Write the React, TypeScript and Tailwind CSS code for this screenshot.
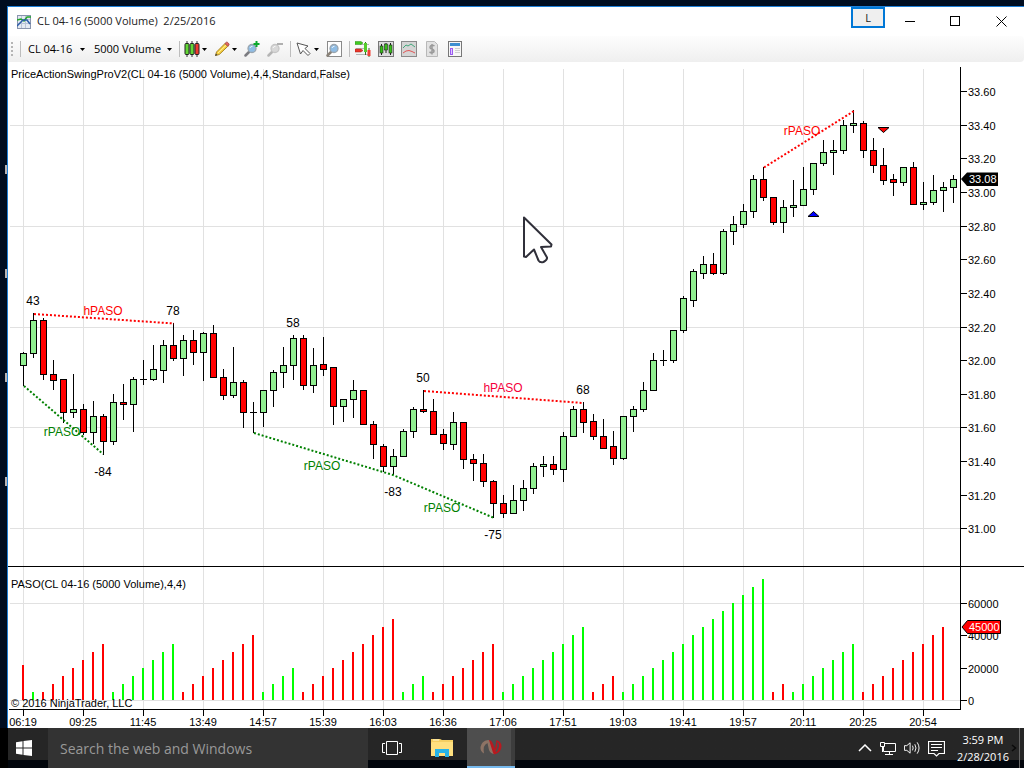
import React from "react";

type Tone = "g" | "r";
type Candle = [high: number, top: number, bottom: number, low: number, tone: Tone];

const FIRST_X = 23;
const STEP = 10;

const candles: Candle[] = [
  [352, 353, 365, 385, "g"], [313, 320, 353, 357, "g"], [318, 320, 374, 379, "r"], [360, 374, 380, 389, "r"],
  [379, 379, 412, 422, "r"], [374, 409, 412, 417, "g"], [404, 409, 432, 434, "r"], [401, 416, 432, 443, "g"],
  [414, 416, 441, 454, "r"], [394, 402, 441, 444, "g"], [384, 402, 404, 419, "r"], [377, 379, 404, 431, "g"],
  [360, 379, 379, 384, "g"], [345, 369, 379, 380, "g"], [340, 345, 370, 382, "g"], [323, 345, 358, 360, "r"],
  [335, 340, 358, 375, "g"], [330, 340, 352, 364, "r"], [332, 333, 352, 380, "g"], [325, 333, 377, 377, "r"],
  [369, 377, 395, 399, "r"], [347, 382, 395, 397, "g"], [380, 382, 412, 427, "r"], [402, 412, 412, 432, "r"],
  [390, 390, 412, 426, "g"], [370, 372, 390, 406, "g"], [347, 365, 372, 387, "g"], [335, 338, 365, 379, "g"],
  [335, 338, 385, 389, "r"], [348, 365, 385, 392, "g"], [337, 364, 369, 375, "r"], [367, 367, 406, 424, "r"],
  [399, 399, 406, 421, "g"], [380, 390, 399, 417, "g"], [390, 390, 424, 424, "r"], [421, 424, 444, 458, "r"],
  [444, 446, 466, 471, "r"], [449, 456, 466, 474, "g"], [429, 431, 456, 456, "g"], [407, 409, 431, 437, "g"],
  [390, 409, 411, 412, "r"], [399, 411, 434, 434, "r"], [429, 434, 443, 449, "r"], [412, 422, 444, 449, "g"],
  [422, 422, 459, 468, "r"], [454, 459, 463, 480, "r"], [454, 463, 481, 486, "r"], [480, 481, 503, 517, "r"],
  [495, 503, 513, 517, "r"], [485, 500, 513, 513, "g"], [480, 488, 500, 510, "g"], [463, 466, 488, 493, "g"],
  [456, 464, 466, 476, "g"], [456, 464, 469, 474, "r"], [432, 436, 469, 481, "g"], [406, 409, 436, 436, "g"],
  [402, 409, 422, 432, "r"], [414, 421, 436, 439, "r"], [419, 436, 448, 448, "r"], [431, 446, 458, 464, "r"],
  [416, 416, 458, 459, "g"], [406, 409, 416, 431, "g"], [382, 390, 409, 411, "g"], [353, 360, 390, 390, "g"],
  [350, 360, 360, 365, "g"], [330, 330, 360, 362, "g"], [296, 298, 330, 332, "g"], [269, 271, 300, 306, "g"],
  [256, 264, 273, 278, "g"], [253, 264, 273, 274, "r"], [229, 231, 273, 274, "g"], [216, 224, 231, 244, "g"],
  [204, 211, 224, 227, "g"], [175, 179, 211, 217, "g"], [167, 179, 197, 200, "r"], [197, 197, 222, 224, "r"],
  [200, 207, 222, 232, "g"], [180, 205, 207, 216, "g"], [167, 189, 205, 205, "g"], [163, 163, 189, 194, "g"],
  [140, 152, 163, 165, "g"], [140, 150, 152, 174, "g"], [120, 125, 150, 153, "g"], [110, 123, 125, 132, "g"],
  [121, 123, 150, 157, "r"], [138, 150, 165, 172, "r"], [148, 165, 180, 184, "r"], [174, 179, 182, 195, "r"],
  [167, 167, 182, 185, "g"], [162, 167, 204, 204, "r"], [182, 202, 204, 209, "g"], [175, 190, 202, 204, "g"],
  [182, 187, 190, 211, "g"], [175, 179, 187, 202, "g"],
];

const runs: [count: number, tone: Tone][] = [
  [1, "g"], [7, "r"], [7, "g"], [8, "r"], [4, "g"], [10, "r"], [3, "g"], [7, "r"],
  [9, "g"], [3, "r"], [15, "g"], [2, "r"], [7, "g"], [9, "r"],
];

const barTops = [692, 684, 676, 668, 660, 652, 644, 635, 627, 619, 611, 603, 595, 587, 579];

const bars: { top: number; tone: Tone }[] = [{ top: 665, tone: "r" }];
runs.forEach(([count, tone]) => {
  for (let n = 0; n < count; n++) bars.push({ top: barTops[n], tone });
});

const times = [
  "06:19", "09:25", "11:45", "13:49", "14:57", "15:39", "16:03", "16:36",
  "17:06", "17:51", "19:03", "19:41", "19:57", "20:11", "20:25", "20:54",
];

const prices: [string, number][] = [
  ["33.60", 91], ["33.40", 125], ["33.20", 158], ["33.00", 192], ["32.80", 226], ["32.60", 259], ["32.40", 293],
  ["32.20", 327], ["32.00", 360], ["31.80", 394], ["31.60", 427], ["31.40", 461], ["31.20", 495], ["31.00", 528],
];

const volumes: [string, number][] = [["60000", 603], ["40000", 635], ["20000", 668], ["0", 700]];

const trends: { points: string; color: string }[] = [
  { points: "34,314 174,323.5", color: "#ff0000" },
  { points: "24,386 103,454", color: "#008000" },
  { points: "254,433 393,475 493,517.5", color: "#008000" },
  { points: "424,391 583,403", color: "#ff0000" },
  { points: "764,167.5 854,111", color: "#ff0000" },
];

const notes: { x: number; y: number; text: string; color: string }[] = [
  { x: 33, y: 305, text: "43", color: "#000" },
  { x: 173, y: 315, text: "78", color: "#000" },
  { x: 293, y: 327, text: "58", color: "#000" },
  { x: 423, y: 382, text: "50", color: "#000" },
  { x: 583, y: 394, text: "68", color: "#000" },
  { x: 103, y: 476, text: "-84", color: "#000" },
  { x: 393, y: 496, text: "-83", color: "#000" },
  { x: 493, y: 539, text: "-75", color: "#000" },
  { x: 103, y: 315, text: "hPASO", color: "#ff0000" },
  { x: 503, y: 392, text: "hPASO", color: "#f5003c" },
  { x: 802, y: 135, text: "rPASO", color: "#ff0000" },
  { x: 62, y: 436, text: "rPASO", color: "#008000" },
  { x: 322, y: 470, text: "rPASO", color: "#008000" },
  { x: 442, y: 512, text: "rPASO", color: "#008000" },
];

const chartFont = "block w-full font-['Liberation_Sans',Arial,sans-serif]";

function GridColumns({ from, to }: { from: number; to: number }) {
  return (
    <g stroke="#e1e1e1" shapeRendering="crispEdges">
      {times.map((t, i) => (
        <line key={t} x1={FIRST_X + i * 60 + 0.5} x2={FIRST_X + i * 60 + 0.5} y1={from} y2={to} />
      ))}
    </g>
  );
}

function PricePanel() {
  return (
    <svg className={chartFont} viewBox="8 62 1016 505" role="img" aria-label="Price chart">
      <GridColumns from={69} to={566} />
      <g stroke="#e1e1e1" shapeRendering="crispEdges">
        {[125, 226, 327, 427, 528].map((y) => (
          <line key={y} x1={10} x2={960} y1={y + 0.5} y2={y + 0.5} />
        ))}
      </g>
      <text x={11} y={78} fontSize={11}>PriceActionSwingProV2(CL 04-16 (5000 Volume),4,4,Standard,False)</text>
      <g stroke="#000" shapeRendering="crispEdges">
        {candles.map(([high, top, bottom, low, tone], i) => {
          const x = FIRST_X + i * STEP + 0.5;
          return (
            <g key={i}>
              <line x1={x} x2={x} y1={high} y2={low + 1} />
              {top === bottom ? (
                <line x1={x - 3.5} x2={x + 3.5} y1={top + 0.5} y2={top + 0.5} />
              ) : (
                <rect x={x - 3} y={top + 0.5} width={6} height={bottom - top} fill={tone === "g" ? "#90ee90" : "#ff0000"} />
              )}
            </g>
          );
        })}
      </g>
      {trends.map((t) => (
        <polyline key={t.points} points={t.points} fill="none" stroke={t.color} strokeWidth={2} strokeDasharray="2 2" />
      ))}
      <g fontSize={12} textAnchor="middle">
        {notes.map((n) => (
          <text key={`${n.x}-${n.y}`} x={n.x} y={n.y} fill={n.color}>{n.text}</text>
        ))}
      </g>
      <path d="M808 216.500L813.500 211.500L819 216.500Z" fill="#0000ff" stroke="#000" />
      <path d="M878 127.500H889L883.500 132.500Z" fill="#ff0000" stroke="#000" />
      <g stroke="#000" shapeRendering="crispEdges">
        <line x1={960.5} x2={960.5} y1={67} y2={567} />
        <line x1={8} x2={1024} y1={566.5} y2={566.5} />
        {prices.map(([label, y]) => (
          <line key={label} x1={961} x2={967} y1={y + 0.5} y2={y + 0.5} />
        ))}
      </g>
      <g fontSize={11}>
        {prices.map(([label, y]) => (
          <text key={label} x={968} y={y + 5}>{label}</text>
        ))}
      </g>
      <path d="M961 179L967 172.500H998V186H967Z" fill="#000" />
      <text x={969} y={183} fontSize={11} fill="#fff">33.08</text>
      <path
        d="M524 217.500V256.500L526 257L534 249.500L538.500 260.500Q540 263 543.500 262Q547.500 260 547 257.500L541 247L551 246.500L551.500 244.500Z"
        fill="#fff" stroke="#30303a" strokeWidth={2} strokeLinejoin="round"
      />
    </svg>
  );
}

function VolumePanel() {
  return (
    <svg className={chartFont} viewBox="8 567 1016 161" role="img" aria-label="Swing volume chart">
      <GridColumns from={567} to={709} />
      <g stroke="#e1e1e1" shapeRendering="crispEdges">
        <line x1={10} x2={960} y1={603.5} y2={603.5} />
        <line x1={10} x2={960} y1={700.5} y2={700.5} />
      </g>
      <text x={11} y={588} fontSize={11}>PASO(CL 04-16 (5000 Volume),4,4)</text>
      <g shapeRendering="crispEdges">
        {bars.map((b, i) => (
          <rect key={i} x={FIRST_X - 1 + i * STEP} y={b.top} width={2} height={700 - b.top} fill={b.tone === "g" ? "#00ff00" : "#ff0000"} />
        ))}
      </g>
      <text x={11} y={707} fontSize={11}>© 2016 NinjaTrader, LLC</text>
      <g stroke="#000" shapeRendering="crispEdges">
        <line x1={960.5} x2={960.5} y1={567} y2={710} />
        <line x1={9} x2={961} y1={709.5} y2={709.5} />
        {times.map((t, i) => (
          <line key={t} x1={FIRST_X + i * 60 + 0.5} x2={FIRST_X + i * 60 + 0.5} y1={710} y2={716} />
        ))}
        {volumes.map(([label, y]) => (
          <line key={label} x1={961} x2={967} y1={y + 0.5} y2={y + 0.5} />
        ))}
      </g>
      <g fontSize={11}>
        {volumes.map(([label, y]) => (
          <text key={label} x={968} y={y + 5}>{label}</text>
        ))}
      </g>
      <g fontSize={11} textAnchor="middle">
        {times.map((t, i) => (
          <text key={t} x={FIRST_X + i * 60} y={726}>{t}</text>
        ))}
      </g>
      <path d="M962 627L967.500 620.500H1000.500V633.500H967.500Z" fill="#ff0000" stroke="#000" />
      <text x={969} y={631} fontSize={11} fill="#fff">45000</text>
    </svg>
  );
}

function Caret() {
  return (
    <svg viewBox="0 0 5 3" className="h-[3px] w-[5px] shrink-0" aria-hidden="true">
      <path d="M0 0H5L2.500 3Z" fill="#000" />
    </svg>
  );
}

function Divider() {
  return <span className="h-4 w-px shrink-0 bg-[#bdbdbd]" />;
}

function Tool({ label, menu, children }: { label: string; menu?: boolean; children: React.ReactNode }) {
  return (
    <button type="button" aria-label={label} className="flex shrink-0 items-center gap-0.5">
      <svg viewBox="0 0 16 16" className="h-4 w-4" aria-hidden="true">{children}</svg>
      {menu && <Caret />}
    </button>
  );
}

function Lens({ handle, ring, glass }: { handle: string; ring: string; glass: string }) {
  return (
    <>
      <path d="M5.500 10.500L1.500 14.500" stroke={handle} strokeWidth={2.5} strokeLinecap="round" />
      <circle cx={8} cy={7.500} r={4} fill={glass} stroke={ring} strokeWidth={1.300} />
      <path d="M6 7Q6.500 5.300 8.500 5.300" fill="none" stroke="#fff" strokeWidth={1} opacity={0.8} />
    </>
  );
}

function Picker({ label, value, width }: { label: string; value: string; width: string }) {
  return (
    <label className="flex items-center gap-1">
      <select aria-label={label} defaultValue={value} className={`${width} h-5 appearance-none bg-transparent p-0 text-[11px] leading-5 text-black`}>
        <option>{value}</option>
      </select>
      <Caret />
    </label>
  );
}

function TitleBar() {
  return (
    <header className="flex h-[29px] items-center bg-white pl-[9px]">
      <svg viewBox="0 0 14 14" className="h-[14px] w-[14px]" aria-hidden="true">
        <rect x={0.500} y={0.500} width={13} height={13} fill="#e4e9f2" stroke="#8995ae" />
        <path d="M4.500 1V13M8.500 1V13M1 4.500H13M1 8.500H13" stroke="#b9c4d6" />
        <path d="M0 5L4 4L7 6L10 2L14 2" fill="none" stroke="#22a52a" strokeWidth={1.500} />
        <path d="M0 11L4 7L6 5L10 5L13 9" fill="none" stroke="#2d5daa" strokeWidth={1.500} />
      </svg>
      <h1 className="ml-1.5 flex-1 whitespace-pre text-[11px] text-[#222]">CL 04-16 (5000 Volume)  2/25/2016</h1>
      <button type="button" className="mr-0.5 h-[21px] w-[34px] self-start border-2 border-[#0078d7] bg-[#efefef] text-[11px] leading-4 text-[#222]">L</button>
      <button type="button" aria-label="Minimize" className="flex h-full w-[46px] items-center justify-center">
        <svg viewBox="0 0 11 11" className="h-[11px] w-[11px]"><path d="M0 5.500H10" stroke="#000" /></svg>
      </button>
      <button type="button" aria-label="Maximize" className="flex h-full w-[45px] items-center justify-center">
        <svg viewBox="0 0 11 11" className="h-[11px] w-[11px]"><rect x={0.500} y={0.500} width={9} height={9} fill="none" stroke="#000" /></svg>
      </button>
      <button type="button" aria-label="Close" className="flex h-full w-[46px] items-center justify-center">
        <svg viewBox="0 0 11 11" className="h-[11px] w-[11px]"><path d="M0.500 0.500L10.500 10.500M10.500 0.500L0.500 10.500" stroke="#000" /></svg>
      </button>
    </header>
  );
}

function Toolbar() {
  return (
    <div role="toolbar" aria-label="Chart tools" className="flex h-[26px] items-center rounded-r bg-linear-to-b from-[#fdfdfd] to-[#efefef] pl-[3px]">
      <svg viewBox="0 0 2 14" className="mr-[7px] h-[14px] w-[2px]" aria-hidden="true">
        <path d="M1 0V14" stroke="#b5b5b5" strokeWidth={2} strokeDasharray="2 2" />
      </svg>
      <div className="flex items-center gap-[7px]">
        <Divider />
        <div className="flex items-center gap-[9px]">
          <Picker label="Instrument" value="CL 04-16" width="w-[48px]" />
          <Picker label="Interval" value="5000 Volume" width="w-[69px]" />
        </div>
        <Divider />
      </div>
      <div className="ml-1 flex items-center gap-[7px]">
        <Tool label="Chart style" menu>
          <path d="M3 0V16M8 0V16M13 0V16" stroke="#333" />
          <rect x={1} y={2.500} width={4} height={11} rx={1} fill="#62d636" stroke="#222" />
          <rect x={6} y={2.500} width={4} height={11} rx={1} fill="#62d636" stroke="#222" />
          <rect x={11} y={2.500} width={4} height={11} rx={1} fill="#ef3b30" stroke="#222" />
        </Tool>
        <Tool label="Drawing tools" menu>
          <path d="M1.500 14.500L2.500 11L11 2.500L13.800 5.300L5.300 13.500Z" fill="#f6cf3c" stroke="#a9862b" />
          <path d="M4 12L12.500 3.800" stroke="#fff0a0" />
          <path d="M11 2.500L12.500 1.200Q13.500 1 14.500 2.300Q15.500 3 14.800 4.200L13.800 5.300Z" fill="#e5655e" stroke="#a84d48" />
          <path d="M1 15L2 12.500L3.500 14Z" fill="#444" />
        </Tool>
        <Tool label="Zoom in">
          <Lens handle="#7b7b80" ring="#9aa5ae" glass="#8fbde5" />
          <path d="M12.500 0V6M9.500 3H15.500" stroke="#0aa82d" strokeWidth={2} />
        </Tool>
        <Tool label="Zoom out">
          <Lens handle="#b5b5b5" ring="#c6c6c6" glass="#d8d8d8" />
          <path d="M10 3H16" stroke="#b0b0b0" strokeWidth={2} />
        </Tool>
        <Divider />
      </div>
      <div className="ml-[5px] flex items-center gap-[7px]">
        <Tool label="Cursor" menu>
          <path d="M1 2L12 5L9 7.500L14 12.500L12 14.500L7 9.500L4.500 13Z" fill="#fff" stroke="#555" strokeLinejoin="round" />
        </Tool>
        <Tool label="Data box">
          <rect x={1.500} y={0.500} width={14} height={15} fill="#fff" stroke="#8a8a8a" />
          <Lens handle="#8a8278" ring="#9aa5ae" glass="#8fbde5" />
        </Tool>
        <Divider />
      </div>
      <div className="ml-[5px] flex items-center gap-[7px]">
        <Tool label="Chart trader">
          <path d="M5 3.500H14M1 7.500H12M1 13.500H14" stroke="#b5b5b5" />
          <path d="M0 0.500H6L8 2L6 3.500H0Z" fill="#40c820" stroke="#2f8a18" strokeWidth={0.500} />
          <path d="M0 8H6L8 9.500L6 11H0Z" fill="#ea3529" stroke="#9c2018" strokeWidth={0.500} />
          <path d="M10.500 1V14M14 7V16" stroke="#376b22" />
          <rect x={9} y={2} width={3} height={9} fill="#54cd2c" />
          <rect x={12.500} y={9} width={3} height={6} fill="#f04034" />
        </Tool>
        <Tool label="Data series">
          <rect x={0.500} y={0.500} width={15} height={15} fill="#ddd" stroke="#777" />
          <path d="M3.500 3V14M8 2V12M12.500 2V14" stroke="#222" />
          <rect x={2} y={5} width={3} height={7} fill="#38be19" stroke="#222" strokeWidth={0.600} />
          <rect x={6.500} y={3} width={3} height={6} fill="#38be19" stroke="#222" strokeWidth={0.600} />
          <rect x={11} y={4} width={3} height={8} fill="#38be19" stroke="#222" strokeWidth={0.600} />
        </Tool>
        <Tool label="Indicators">
          <rect x={0.500} y={0.500} width={15} height={15} fill="#d5d5d5" stroke="#8a8a8a" />
          <path d="M2 7L5 4L7 5L10 3L14 6" fill="none" stroke="#43a77b" />
          <path d="M2 12L5 10L8 9.500L11 10.500L14 12" fill="none" stroke="#e25555" />
        </Tool>
        <Tool label="Strategies">
          <path d="M2.500 0.500H10.500L13.500 3.500V15.500H2.500Z" fill="#e2e2e2" stroke="#b8b8b8" />
          <path d="M10.500 5Q9 4 7.500 4.500Q5.500 5.200 6.200 7Q7 8 8.500 8.200Q10.500 9 9.800 11Q8 12.500 5.500 11M8 3V13.500" fill="none" stroke="#9a9a9a" strokeWidth={1.500} />
        </Tool>
        <Tool label="Properties">
          <rect x={1.500} y={0.500} width={13} height={15} fill="#f7f7f7" stroke="#777" />
          <rect x={3} y={2} width={10} height={3} fill="#3d8fd1" />
          <rect x={3.500} y={7.500} width={2} height={6} fill="#dec8ff" stroke="#9b5cf0" />
          <path d="M8 7.500H13M8 9.500H13M8 11.500H13" stroke="#d0d0d0" />
        </Tool>
      </div>
    </div>
  );
}

function Taskbar() {
  return (
    <footer className="flex h-10 items-stretch bg-linear-to-b from-[#262626] from-80% to-[#02060c] to-80% text-white">
      <button type="button" aria-label="Start" className="flex w-12 items-center justify-center border-l-8 border-black pr-2">
        <svg viewBox="0 0 16 16" className="h-4 w-4"><path d="M0 2.200L6.500 1.200V7.500H0ZM7.500 1L16 0V7.500H7.500ZM0 8.500H6.500V14.800L0 13.800ZM7.500 8.500H16V16L7.500 15Z" fill="#fff" /></svg>
      </button>
      <input type="text" aria-label="Search the web and Windows" placeholder="Search the web and Windows" className="w-80 bg-[#333] px-3 text-[14px] text-white placeholder:text-[#999]" />
      <button type="button" aria-label="Task view" className="flex w-12 items-center justify-center">
        <svg viewBox="0 0 20 16" className="h-4 w-5" fill="none" stroke="#fff">
          <path d="M4.500 1.500H15.500V14.500H4.500ZM3 3.500H0.500V12.500H3M17 3.500H19.500V12.500H17" />
        </svg>
      </button>
      <button type="button" aria-label="File Explorer" className="flex w-[51px] items-center justify-center">
        <svg viewBox="0 0 22 18" className="h-[18px] w-[22px]">
          <path d="M0 0H9L11 1H22V17H0Z" fill="#f5cf62" />
          <path d="M1 3H22V17H0V4Z" fill="#ffe07f" />
          <path d="M2 1H8" stroke="#fff6d0" />
          <path d="M4 18V10H18V18H14V14H8V18Z" fill="#27b4e8" />
        </svg>
      </button>
      <button type="button" aria-label="NinjaTrader" className="flex w-12 items-center justify-center border-b-2 border-[#76b9ed] bg-linear-to-r from-[#4e4e4e] from-92% to-[#3d3d3d] to-92%">
        <svg viewBox="0 0 22 16" className="h-4 w-[22px]">
          <path d="M4 14.500Q0 12 0.500 8Q1.500 2 8 1Q10.500 1 12 5L15 15Q10.500 15 9 11L7.500 4Q2.500 6 4 14.500Z" fill="#8d7365" />
          <path d="M9 1Q11.500 1 13 5L15 10L16.500 1Q22 3 21.500 8Q20.500 14 14 15.500Q12.500 13 11.500 9Z" fill="#b9191f" />
          <path d="M17.500 3.500Q19.500 8 16 12.500" fill="none" stroke="#4e4e4e" strokeWidth={1.500} />
        </svg>
      </button>
      <div className="ml-auto flex items-center gap-2">
        <button type="button" aria-label="Show hidden icons">
          <svg viewBox="0 0 14 8" className="h-2 w-[14px]"><path d="M1 7L7 1L13 7" fill="none" stroke="#fff" strokeWidth={1.500} /></svg>
        </button>
        <button type="button" aria-label="Network">
          <svg viewBox="1 0 16 15" className="h-[15px] w-4" fill="none" stroke="#fff">
            <path d="M6 2.500H16.500V10.500H4.500V6M10.500 10.500V13M6 13.500H14M1.500 1.500H5.500V5.500H1.500ZM3.500 5.500V11" />
          </svg>
        </button>
        <button type="button" aria-label="Volume">
          <svg viewBox="0 0 17 16" className="h-4 w-4" fill="none" stroke="#fff">
            <path d="M0.500 5.500H3L6.500 2.500V13.500L3 10.500H0.500ZM9 5.500Q10.500 8 9 10.500M11.500 4Q14 8 11.500 12M14 2Q18 8 14 14" />
          </svg>
        </button>
        <button type="button" aria-label="Notifications">
          <svg viewBox="0 0 17 17" className="h-[17px] w-[17px]" fill="none" stroke="#fff">
            <path d="M0.500 1.500H16.500V13.500H11L8.500 16L6 13.500H0.500ZM3 4.500H14M3 7.500H14M3 10.500H10" strokeWidth={1.200} />
          </svg>
        </button>
        <div className="flex items-center gap-0.5 pr-1 pl-1">
          <time className="text-center text-[11px] leading-[17px]">3:59 PM<br />2/28/2016</time>
          <svg viewBox="0 0 6 8" className="h-2 w-1.5" aria-hidden="true"><path d="M1 1L4.500 4L1 7" fill="none" stroke="#0a0a0a" strokeWidth={1.500} /></svg>
          <span className="h-10 w-px bg-[#666]" />
        </div>
      </div>
    </footer>
  );
}

export default function App() {
  return (
    <div className="flex min-h-screen flex-col bg-[#000d20] font-['Open_Sans','Noto_Sans',sans-serif]">
      <div className="flex flex-1 pt-1.5">
        <aside className="flex w-[7px] flex-col items-end gap-[95px] pt-[159px]" aria-hidden="true">
          {[0, 1, 2, 3].map((n) => (
            <span key={n} className="h-[9px] w-0.5 bg-[#b9b4b4]" />
          ))}
        </aside>
        <main className="min-w-0 flex-1 border-t border-l border-[#1e7fd6] bg-white">
          <TitleBar />
          <Toolbar />
          <PricePanel />
          <VolumePanel />
        </main>
      </div>
      <Taskbar />
    </div>
  );
}
